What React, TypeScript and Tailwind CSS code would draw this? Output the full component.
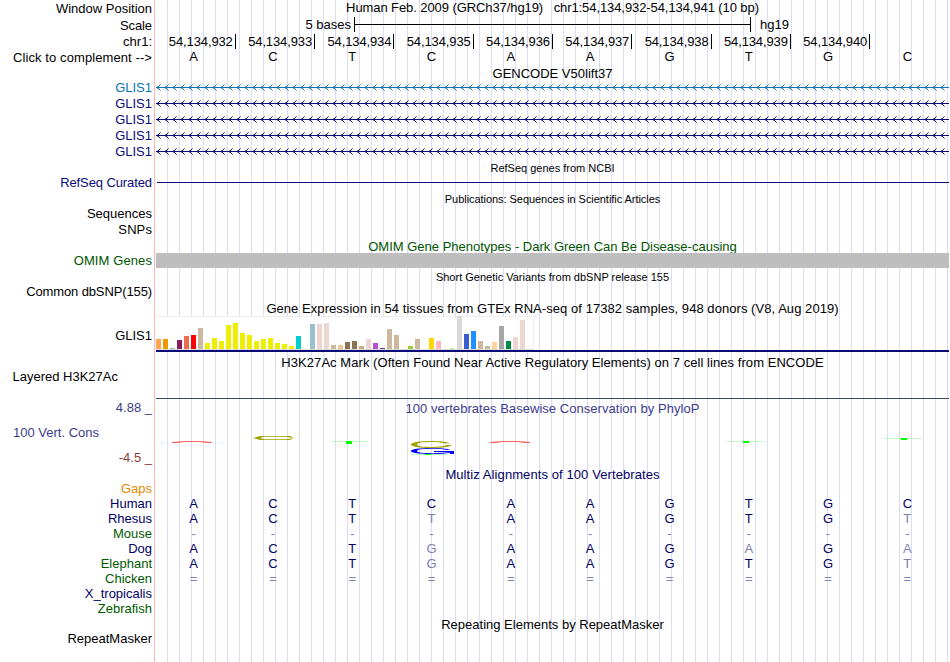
import { clsx } from "clsx"

const labels = [
  { text: "Window Position", cls: "mt-px" },
  { text: "Scale", cls: "mt-px tracking-[-0.1px]" },
  { text: "chr1:" },
  { text: "Click to complement -->", cls: "tracking-[0.09px]" },
  { text: "GLIS1", cls: "mt-[14px] text-[#0c73b0]" },
  { text: "GLIS1", cls: "text-[#0c0c78]" },
  { text: "GLIS1", cls: "text-[#0c0c78]" },
  { text: "GLIS1", cls: "text-[#0c0c78]" },
  { text: "GLIS1", cls: "text-[#0c0c78]" },
  { text: "RefSeq Curated", cls: "mt-[15px] tracking-[-0.1px] text-[#0c0c78]" },
  { text: "Sequences", cls: "mt-[15px]" },
  { text: "SNPs", cls: "tracking-[0.1px]" },
  { text: "OMIM Genes", cls: "mt-[15px] tracking-[0.1px] text-[#005500]" },
  { text: "Common dbSNP(155)", cls: "mt-[15px] tracking-[-0.12px]" },
  { text: "GLIS1", cls: "mt-7" },
  { text: "Layered H3K27Ac", cls: "mt-[25px] pr-[34px]" },
  { text: "4.88 _", cls: "mt-[15px] text-[#3c3c8c]" },
  { text: "100 Vert. Cons", cls: "mt-[9px] pr-[53px] text-[#3c3c8c]" },
  { text: "-4.5 _", cls: "mt-[9px] text-[#8c3c3c]" },
]

const species = [
  { name: "Gaps", cls: "text-[#e68a00]", bases: "" },
  { name: "Human", cls: "text-[#000064]", bases: "ACTCAAGTGC" },
  { name: "Rhesus", cls: "text-[#000064]", bases: "ACTtAAGTGt" },
  { name: "Mouse", cls: "text-[#005a00]", bases: "----------" },
  { name: "Dog", cls: "text-[#000064]", bases: "ACTgAAGaGa" },
  { name: "Elephant", cls: "text-[#005a00]", bases: "ACTgAAGTGt" },
  { name: "Chicken", cls: "text-[#005a00]", bases: "==========" },
  { name: "X_tropicalis", cls: "text-[#000064]", bases: "" },
  { name: "Zebrafish", cls: "text-[#005a00]", bases: "" },
]

const positions = [
  "54,134,932", "54,134,933", "54,134,934", "54,134,935", "54,134,936",
  "54,134,937", "54,134,938", "54,134,939", "54,134,940",
]

// GTEx tissues, one bar per 7px slot: [height, colour]
const tissues: [number, string][] = [
  [10, "#ffa54f"], [10, "#ee9a00"], [1, "#8fbc8f"], [9, "#8b1c62"], [13, "#ee6a50"], [14, "#ff0000"],
  [21, "#cdb79e"], [6, "#eeee00"], [11, "#eeee00"], [8, "#eeee00"], [24, "#eeee00"], [26, "#eeee00"],
  [16, "#eeee00"], [14, "#eeee00"], [8, "#eeee00"], [10, "#eeee00"], [11, "#eeee00"], [6, "#eeee00"],
  [5, "#eeee00"], [3, "#eeee00"], [13, "#00cdcd"], [0, "#ee82ee"], [25, "#9ac0cd"], [25, "#eed5d2"],
  [26, "#eed5d2"], [4, "#cdb79e"], [4, "#eec591"], [7, "#8b7355"], [8, "#8b7355"], [3, "#cdaa7d"],
  [10, "#eed5d2"], [6, "#b452cd"], [1, "#7a378b"], [20, "#cdb79e"], [14, "#cdb79e"], [0, "#cdb79e"],
  [3, "#9acd32"], [10, "#cdb79e"], [0, "#7a67ee"], [11, "#ffd700"], [8, "#ffb6c1"], [0, "#cd9b1d"],
  [1, "#b4eeb4"], [33, "#d9d9d9"], [15, "#3a5fcd"], [18, "#1e90ff"], [8, "#cdb79e"], [3, "#cdb79e"],
  [7, "#ffd39b"], [23, "#a6a6a6"], [8, "#008b45"], [12, "#eed5d2"], [29, "#eed5d2"], [0, "#ff00ff"],
]

function Bases({ bases, className }: { bases: string; className?: string }) {
  return (
    <div className={clsx("-ml-px grid w-[793px] grid-cols-10 text-center", className)}>
      {bases.split("").map((b, i) => (
        <span key={i} className={/[A-Z]/.test(b) ? "-ml-0.5" : "-ml-0.5 text-[#8080b1]"}>
          {b.toUpperCase()}
        </span>
      ))}
    </div>
  )
}

function Title({ children, className }: { children: string; className?: string }) {
  return <div className={clsx("text-center whitespace-pre", className)}>{children}</div>
}

function Transcript({ className }: { className: string }) {
  const tips = Array.from({ length: 99 }, (_, i) => 1 + i * 8)
  return (
    <svg width="793" height="16" className={clsx("block", className)} shapeRendering="crispEdges" fill="currentColor">
      <rect x="0" y="7" width="793" height="1" />
      {tips.map((x) => (
        <g key={x}>
          <path d={`M${x} 6h2v3h-2z`} opacity=".45" />
          <path d={`M${x + 1} 6h1v3h-1zM${x + 2} 5h1v1h-1zM${x + 2} 9h1v1h-1z`} />
          <path d={`M${x + 3} 4h1v1h-1zM${x + 3} 10h1v1h-1z`} opacity=".5" />
        </g>
      ))}
    </svg>
  )
}

function Expression() {
  return (
    <div className="h-[36px] border-b-2 border-[#0c0c78]">
      <div className="flex h-[34px] w-[378px] items-end border-t border-r border-[#f0f0f0] bg-white">
        {tissues.map(([h, color], i) => (
          <div key={i} className="flex h-full w-[7px] shrink-0 items-end border-b border-[#dcdcdc]">
            <div className="w-[5px]" style={{ height: h, background: color }} />
          </div>
        ))}
      </div>
    </div>
  )
}

// Sequence logo, letters are squashed to their conservation score
function Conservation() {
  return (
    <svg width="793" height="40" className="block">
      <g fill="#ff3030">
        <path d="M16 22.700V22L28 21.200Q36 20.600 44 21.200L56 22V22.700H50L44 22Q36 21.400 28 22L22 22.700z" />
        <path d="M334 22.700V22L346 21.200Q354 20.600 362 21.200L374 22V22.700H368L362 22Q354 21.400 346 22L340 22.700z" />
      </g>
      <g fill="#a3a300" fillRule="evenodd">
        <path d="M97 18L104 16H134L137.500 17.500L135 17.800L130 16.800H108L104 18L108 19.200H130L137.500 18.200L134 20H104z" />
        <path d="M294 23.200C290 21.800 283 21 276 21C263 21 255 22.400 255 24.500C255 26.700 263 28 276 28C285 28 293 27 296 25.200L291 25C288 26.200 283 27 276 27C267 27 261 26.200 261 24.500C261 22.800 267 22 276 22C282 22 287 22.600 289 23.500z" />
      </g>
      <g fill="#00ff00">
        <path d="M175 21h37v1h-37zM571 21h37v1h-37zM729 18h37v1h-37zM254 34h37v1h-37z" opacity=".25" />
        <path d="M190 21h6v3h-6zM587 21h6v2h-6zM745 18h6v2h-6zM269 34h6v1h-6z" />
      </g>
      <path
        d="M295 29.800C291 28.600 284 28 277 28C263 28 255 29 255 31C255 33 263 34 276 34C284 34 290 33.600 294 32.800V34H298V31H278V32H293C289 32.700 283 33.200 277 33.200C267 33.200 261 32.500 261 31C261 29.500 267 28.800 277 28.800C283 28.800 288 29.200 291 30z"
        fill="#0000ff"
      />
    </svg>
  )
}

export default function App() {
  return (
    <div className="flex h-[662px] w-[950px] overflow-hidden bg-white font-['Liberation_Sans',Arial,sans-serif] text-[13px] leading-4 text-black">
      {/* Track labels */}
      <div className="w-[154px] shrink-0 pr-[2px] text-right whitespace-nowrap">
        {labels.map((l, i) => (
          <div key={i} className={clsx("h-4", l.cls)}>{l.text}</div>
        ))}
        <div className="mt-[15px]">
          {species.map((s) => (
            <div key={s.name} className={clsx("h-[15px]", s.cls)}>{s.name}</div>
          ))}
        </div>
        <div className="mt-[15px]">RepeatMasker</div>
      </div>

      {/* Browser image with guidelines every 12px */}
      <div className="w-[795px] shrink-0 border-l border-[#ffb4b4] pl-px">
        <div className="h-[662px] w-[793px] bg-[repeating-linear-gradient(to_right,transparent_0_11px,#dcdcf5_11px_12px)]">
          <Title className="h-4 tracking-[-0.085px]">{"Human Feb. 2009 (GRCh37/hg19)   chr1:54,134,932-54,134,941 (10 bp)"}</Title>
          <div className="mt-px flex h-4">
            <span className="w-[195px] text-right">5 bases</span>
            <div className="ml-[3px] flex h-[15px] w-[397px] items-center border-x border-black">
              <div className="h-px w-full bg-black" />
            </div>
            <span className="ml-[9px]">hg19</span>
          </div>
          <div className="mt-px flex h-[15px] pl-[0.45px]">
            {positions.map((p) => (
              <div key={p} className="w-[79.3px] border-r border-black pr-[2px] text-right tracking-[-0.12px]">{p}</div>
            ))}
          </div>
          <Bases bases="ACTCAAGTGC" className="h-4" />
          <Title className="mt-px h-4">GENCODE V50lift37</Title>
          <div className="mt-[-2px]">
            <Transcript className="text-[#0c73b0]" />
            <Transcript className="text-[#0c0c78]" />
            <Transcript className="text-[#0c0c78]" />
            <Transcript className="text-[#0c0c78]" />
            <Transcript className="text-[#0c0c78]" />
          </div>
          <Title className="h-4 text-[11px]">RefSeq genes from NCBI</Title>
          <div className="mt-[6px] ml-px h-px bg-[#0c0c78]" />
          <Title className="mt-2 h-4 text-[11px] tracking-[-0.05px]">Publications: Sequences in Scientific Articles</Title>
          <Title className="mt-8 h-[14px] overflow-hidden text-[#005500]">OMIM Gene Phenotypes - Dark Green Can Be Disease-causing</Title>
          <div className="h-[15px] bg-[#bebebe]" />
          <Title className="mt-px h-4 text-[11px]">Short Genetic Variants from dbSNP release 155</Title>
          <Title className="mt-4 h-[15px] tracking-[0.055px]">Gene Expression in 54 tissues from GTEx RNA-seq of 17382 samples, 948 donors (V8, Aug 2019)</Title>
          <Expression />
          <Title className="mt-[3px] h-4 tracking-[0.055px]">H3K27Ac Mark (Often Found Near Active Regulatory Elements) on 7 cell lines from ENCODE</Title>
          <div className="mt-[27px] h-px bg-[#2f4f5f]" />
          <Title className="mt-[2px] h-4 tracking-[0.04px] text-[#3c3c8c]">100 vertebrates Basewise Conservation by PhyloP</Title>
          <div className="mt-[3px]"><Conservation /></div>
          <Title className="mt-[7px] h-4 tracking-[0.09px] text-[#000064]">Multiz Alignments of 100 Vertebrates</Title>
          <div className="mt-[-2px] text-[#000064]">
            {species.map((s) => (
              <Bases key={s.name} bases={s.bases} className="h-[15px]" />
            ))}
          </div>
          <Title className="mt-px h-4">Repeating Elements by RepeatMasker</Title>
        </div>
      </div>
    </div>
  )
}
